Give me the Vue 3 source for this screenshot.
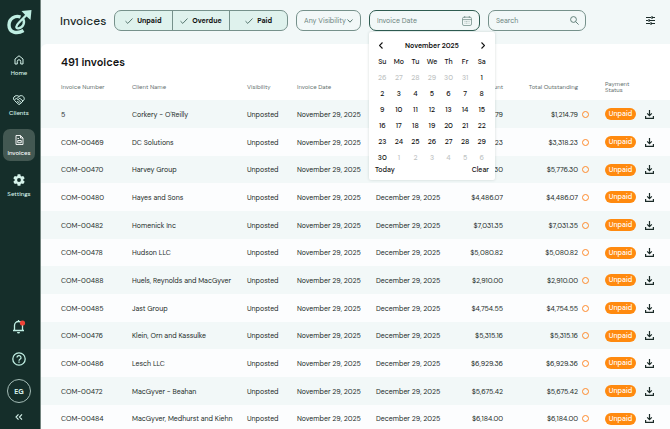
<script setup>
import { ref } from 'vue'

const statuses = ref([
  { label: 'Unpaid', on: true },
  { label: 'Overdue', on: true },
  { label: 'Paid', on: true },
])

const invoices = [
  ['5', "Corkery - O'Reilly", '$1,214.79'],
  ['COM-00469', 'DC Solutions', '$3,318.23'],
  ['COM-00470', 'Harvey Group', '$5,776.30'],
  ['COM-00480', 'Hayes and Sons', '$4,486.07'],
  ['COM-00482', 'Homenick Inc', '$7,031.35'],
  ['COM-00478', 'Hudson LLC', '$5,080.82'],
  ['COM-00488', 'Huels, Reynolds and MacGyver', '$2,910.00'],
  ['COM-00485', 'Jast Group', '$4,754.55'],
  ['COM-00476', 'Klein, Orn and Kassulke', '$5,315.16'],
  ['COM-00486', 'Lesch LLC', '$6,929.36'],
  ['COM-00472', 'MacGyver - Beahan', '$5,675.42'],
  ['COM-00484', 'MacGyver, Medhurst and Kiehn', '$6,184.00'],
].map(([number, client, amount]) => ({ number, client, amount }))

const weekdays = ['Su', 'Mo', 'Tu', 'We', 'Th', 'Fr', 'Sa']
const weeks = Array.from({ length: 6 }, (_, w) =>
  weekdays.map((_, d) => {
    const date = new Date(2025, 9, 26 + w * 7 + d)
    return { day: date.getDate(), muted: date.getMonth() !== 10 }
  })
)
</script>

<template>
  <div class="app">
    <nav class="sidebar">
      <a href="#" class="logo" aria-label="Dashboard">
        <svg width="25" height="26" viewBox="0 0 25 26" fill="none" stroke="#bfeee2">
          <path d="M13.500 8C8 6 2 9.500 2 16c0 7.500 8 9.500 14.500 5.500" stroke-width="3.400" />
          <path d="M20.500 5L12 13.500c-3.500 3.500-3.500 6.300-.5 5.800 4.500-.8 7.500-6 4-10.300" stroke-width="2.300" />
          <path d="M14.500 2L24.500 1l-1 10-3-2.800-2.700-2.700z" fill="#bfeee2" stroke="none" />
        </svg>
      </a>
      <div class="links">
        <a href="#" class="link">
          <svg width="10" height="10" viewBox="0 0 20 20" fill="none" stroke="currentColor" stroke-width="2">
            <path d="M2 8L10 1.500 18 8v10h-4.500v-5a3.500 3.500 0 0 0-7 0v5H2z" />
          </svg>
          Home
        </a>
        <a href="#" class="link">
          <svg width="12" height="10" viewBox="0 0 24 20" fill="none" stroke="currentColor" stroke-width="2">
            <path d="M12 3C9 0 4 1 2 4s-1 5 1 7l8 7.500c1 .8 2 .6 3-.2l7-7.300c2-2 2-5 0-7.500-2.500-2.800-6.500-3-9-.5L7.500 7.500c1 2 3 2 4.500.5l1.500-1.500L20 12M11 10l5.500 5M8.500 12l5 5M3 10l4-4" />
          </svg>
          Clients
        </a>
        <a href="#" class="link active" aria-current="page">
          <svg width="9" height="10" viewBox="0 0 18 20" fill="none" stroke="currentColor" stroke-width="1.800">
            <path d="M2 1h9l5 5v13H2zM11 1v5h5M5 7h3M5.500 11h7v4.500h-7z" />
          </svg>
          Invoices
        </a>
        <a href="#" class="link">
          <svg width="12" height="12" viewBox="2 2 20 20" fill="currentColor">
            <path fill-rule="evenodd" d="M19.140 12.940c.04-.3.060-.61.060-.94s-.02-.64-.07-.94l2.030-1.580a.5.500 0 0 0 .12-.61l-1.920-3.320a.5.500 0 0 0-.59-.22l-2.390.96a7 7 0 0 0-1.620-.94l-.36-2.540A.5.500 0 0 0 13.920 2.400h-3.840a.5.500 0 0 0-.47.41l-.36 2.540a7 7 0 0 0-1.620.94l-2.390-.96a.5.500 0 0 0-.59.220L2.740 8.870a.5.500 0 0 0 .12.610l2.030 1.580a6 6 0 0 0 0 1.880l-2.030 1.580a.5.500 0 0 0-.12.610l1.920 3.320c.12.220.37.290.59.220l2.390-.96c.5.380 1.030.7 1.620.94l.36 2.540c.05.240.24.410.48.410h3.840c.24 0 .44-.17.470-.41l.36-2.540a7 7 0 0 0 1.620-.94l2.390.96c.22.080.47 0 .59-.22l1.920-3.320a.5.500 0 0 0-.12-.61zM12 15.200a3.200 3.200 0 1 1 0-6.400 3.200 3.200 0 0 1 0 6.400z" />
          </svg>
          Settings
        </a>
      </div>
      <div class="tools">
        <button type="button" class="tool" aria-label="Notifications">
          <svg width="14" height="15" viewBox="0 0 14 15" fill="none" stroke="#bfeee2" stroke-width="1.300">
            <path d="M1 11.500h11M2.500 11.500V6.500a4 4 0 0 1 8 0v5M6.500 2.500V1" />
            <path d="M5 13a1.500 1.500 0 0 0 3 0z" fill="#bfeee2" stroke="none" />
            <circle cx="10.500" cy="4" r="2.600" fill="#f04438" stroke="none" />
          </svg>
        </button>
        <button type="button" class="tool" aria-label="Help">
          <svg width="14" height="14" viewBox="0 0 14 14" fill="none" stroke="#bfeee2" stroke-width="1.300">
            <circle cx="7" cy="7" r="6.200" />
            <path d="M5 5.600a2 2 0 1 1 3 1.700c-.7.400-1 .8-1 1.500M7 9.600v1.200" />
          </svg>
        </button>
        <button type="button" class="avatar" aria-label="Account">EG</button>
        <button type="button" class="tool collapse" aria-label="Collapse menu">
          <svg width="8" height="6" viewBox="0 0 8 6" fill="none" stroke="#d5f2ea" stroke-width="1.100">
            <path d="M3.500.4L1 3l2.500 2.600M7 .4L4.500 3 7 5.600" />
          </svg>
        </button>
      </div>
    </nav>

    <main class="main">
      <header class="topbar">
        <h1>Invoices</h1>
        <div class="segments">
          <button v-for="s in statuses" :key="s.label" type="button" class="segment" :aria-pressed="s.on" @click="s.on = !s.on">
            <svg width="8" height="6" viewBox="0 0 8 6" fill="none" stroke="#54746d"><path d="M.5 3.200L2.800 5.400 7.500.5" /></svg>
            {{ s.label }}
          </button>
        </div>
        <div class="field visibility">
          <select aria-label="Visibility"><option>Any Visibility</option></select>
          <svg width="6" height="4" viewBox="0 0 6 4" fill="none" stroke="#54746d"><path d="M.5.500L3 3.200 5.500.5" /></svg>
        </div>
        <div class="field date">
          <input type="text" placeholder="Invoice Date" aria-label="Invoice Date" />
          <svg width="10" height="10" viewBox="0 0 10 10" fill="none" stroke="#76918b" stroke-width=".8">
            <rect x=".5" y="1.200" width="9" height="8.300" rx="1.500" />
            <path d="M.5 3.600h9M2.700 0v2M7.300 0v2" />
            <path d="M2.500 5.500h5M2.500 7.200h5" stroke-width=".5" stroke-dasharray="1 .5" />
          </svg>
          <div class="calendar">
            <div class="cal-head">
              <button type="button" aria-label="Previous month">
                <svg width="4" height="7" viewBox="0 0 4 7" fill="none" stroke="#111" stroke-width="1.100"><path d="M3.500.5l-3 3 3 3" /></svg>
              </button>
              <strong>November 2025</strong>
              <button type="button" aria-label="Next month">
                <svg width="4" height="7" viewBox="0 0 4 7" fill="none" stroke="#111" stroke-width="1.100"><path d="M.5.500l3 3-3 3" /></svg>
              </button>
            </div>
            <table class="cal-grid">
              <thead><tr><th v-for="d in weekdays" :key="d" scope="col">{{ d }}</th></tr></thead>
              <tbody>
                <tr v-for="(week, i) in weeks" :key="i">
                  <td v-for="(c, j) in week" :key="j"><button type="button" :class="{ muted: c.muted }">{{ c.day }}</button></td>
                </tr>
              </tbody>
            </table>
            <div class="cal-foot">
              <button type="button">Today</button>
              <button type="button">Clear</button>
            </div>
          </div>
        </div>
        <div class="field search">
          <input type="search" placeholder="Search" aria-label="Search" />
          <svg width="9" height="9" viewBox="0 0 9 9" fill="none" stroke="#54746d" stroke-width=".9"><circle cx="3.500" cy="3.500" r="2.900" /><path d="M5.700 5.700L8.600 8.600" /></svg>
        </div>
        <button type="button" class="settings" aria-label="Table options">
          <svg width="9" height="9" viewBox="0 0 9 9" fill="none" stroke="#1b2b28" stroke-width="1.100">
            <path d="M0 1.500h5M6.500 1.500H9M6 0v3M0 4.500h2M3.500 4.500H9M3 3v3M0 7.500h4M5.500 7.500H9M5 6v3" />
          </svg>
        </button>
      </header>

      <section class="card">
        <h2>491 invoices</h2>
        <table class="invoices">
          <colgroup>
            <col class="c-number" /><col /><col class="c-vis" /><col class="c-date" /><col class="c-due" />
            <col class="c-amount" /><col class="c-total" /><col class="c-status" /><col class="c-action" />
          </colgroup>
          <thead>
            <tr>
              <th scope="col">Invoice Number</th>
              <th scope="col">Client Name</th>
              <th scope="col">Visibility</th>
              <th scope="col">Invoice Date</th>
              <th scope="col">Due Date</th>
              <th scope="col" class="num">Amount</th>
              <th scope="col" class="num total">Total Outstanding</th>
              <th scope="col" class="status">Payment<br />Status</th>
              <td></td>
            </tr>
          </thead>
          <tbody>
            <tr v-for="inv in invoices" :key="inv.number">
              <td>{{ inv.number }}</td>
              <td>{{ inv.client }}</td>
              <td>Unposted</td>
              <td>November 29, 2025</td>
              <td>December 29, 2025</td>
              <td class="num">{{ inv.amount }}</td>
              <td><div class="outstanding">{{ inv.amount }}<span class="ring"></span></div></td>
              <td class="status"><span class="pill">Unpaid</span></td>
              <td class="action">
                <button type="button" :aria-label="'Download ' + inv.number">
                  <svg width="9" height="9" viewBox="0 0 9 9" fill="none" stroke="#1b2b28" stroke-width="1.200">
                    <path d="M4.500 0v5.500M2.200 3.300l2.300 2.300 2.300-2.300M.6 6v2.300h7.800V6" />
                  </svg>
                </button>
              </td>
            </tr>
          </tbody>
        </table>
      </section>
    </main>
  </div>
</template>

<style>
body {
  margin: 0;
  overflow: hidden;
}
</style>

<style scoped>
.app {
  display: flex;
  height: 100vh;
  overflow: hidden;
  font-family: 'DM Sans', Inter, 'Liberation Sans', sans-serif;
  font-size: 7px;
  color: #1b2b28;
  background: #f2f8f8;
}
button, input, select {
  font: inherit;
  color: inherit;
  border: 0;
  padding: 0;
  margin: 0;
  background: none;
}
button { cursor: pointer; }
svg { display: block; flex: none; }
a { color: inherit; text-decoration: none; }

.sidebar {
  flex: none;
  display: flex;
  flex-direction: column;
  align-items: center;
  box-sizing: border-box;
  width: 41px;
  padding: 9px 5px 9px 3px;
  background: #152e2a;
  border-right: 1px solid #73847f;
  color: #d5f2ea;
}
.logo { margin-bottom: 14px; }
.links {
  display: flex;
  flex-direction: column;
  gap: 8px;
}
.link {
  display: flex;
  flex-direction: column;
  align-items: center;
  justify-content: center;
  gap: 4px;
  box-sizing: border-box;
  width: 32px;
  height: 32px;
  padding-top: 2px;
  border-radius: 7px;
  font-size: 6px;
  font-weight: 500;
  line-height: 8px;
}
.link.active { background: #435852; color: #fff; }
.tools {
  display: flex;
  flex-direction: column;
  align-items: center;
  margin-top: auto;
}
.tool { margin-bottom: 18px; }
.avatar {
  width: 24px;
  height: 24px;
  margin: -5px 0 11px;
  border: 1px solid #a5bdb7;
  border-radius: 50%;
  font-weight: 700;
}
.collapse { margin-bottom: 0; }

.main {
  flex: 1;
  min-width: 0;
}
.topbar {
  display: flex;
  align-items: center;
  box-sizing: border-box;
  height: 44px;
  padding: 0 14px 3px 19px;
}
h1 {
  flex: none;
  width: 46px;
  margin: 0 8px 0 0;
  font-size: 12px;
  line-height: 16px;
  font-weight: 500;
}
.segments {
  flex: none;
  display: flex;
  box-sizing: border-box;
  width: 174px;
  height: 21px;
  border: 1px solid #76918b;
  border-radius: 7px;
  background: #dff2ed;
  overflow: hidden;
}
.segment {
  flex: 1;
  display: flex;
  align-items: center;
  justify-content: center;
  gap: 4px;
  color: #111;
  font-weight: 700;
}
.segment + .segment { border-left: 1px solid #76918b; }
.field {
  position: relative;
  display: flex;
  align-items: center;
  box-sizing: border-box;
  height: 21px;
  margin-left: 8px;
  padding: 0 7px;
  border: 1px solid #76918b;
  border-radius: 7px;
  color: #6d8580;
}
.field input,
.field select {
  flex: 1;
  min-width: 0;
  height: 19px;
  outline: none;
  appearance: none;
}
.field input::placeholder { color: #6d8580; opacity: 1; }
.visibility { width: 65px; }
.date {
  width: 111px;
  border-color: #2f5c51;
}
.search {
  width: 98px;
  padding-right: 6px;
}
.settings { margin-left: auto; margin-right: 1px; }

.calendar {
  position: absolute;
  z-index: 2;
  top: 21px;
  left: -1px;
  box-sizing: border-box;
  width: 126px;
  padding: 5px 5px 6px;
  background: #fff;
  border-radius: 2px;
  box-shadow: 0 0 3px rgba(20, 50, 45, 0.18);
  color: #111;
}
.cal-head {
  display: flex;
  align-items: center;
  justify-content: space-between;
  height: 17px;
  padding: 0 5px;
}
.cal-head strong { font-weight: 600; }
.cal-grid {
  width: 100%;
  table-layout: fixed;
  border-collapse: collapse;
}
.cal-grid th,
.cal-grid td {
  height: 16px;
  padding: 0;
  text-align: center;
  font-weight: 500;
  line-height: 10px;
}
.cal-grid button { display: block; width: 100%; }
.cal-grid .muted { color: #c0c4c4; }
.cal-foot {
  display: flex;
  justify-content: space-between;
  line-height: 8px;
  padding: 0 1px;
  font-weight: 500;
}

.card {
  background: #fff;
  border-top-left-radius: 6px;
}
h2 {
  margin: 0;
  padding: 10px 20px 4px;
  font-size: 11px;
  line-height: 16px;
  font-weight: 600;
  color: #111;
}
.invoices {
  width: 100%;
  table-layout: fixed;
  border-collapse: collapse;
}
.invoices th,
.invoices td {
  padding: 0;
  text-align: left;
  white-space: nowrap;
}
.invoices th {
  height: 26px;
  font-size: 6px;
  line-height: 6px;
  font-weight: 400;
  color: #66716f;
}
.invoices tbody tr { height: 28px; background: #fcfdfe; }
.invoices tbody tr:nth-child(3n) { height: 27px; }
.invoices tbody tr:nth-child(odd) { background: #f2f8f8; }
.invoices tr > :first-child { padding-left: 20px; }
.invoices .num { text-align: right; }
.invoices .total { padding-right: 11px; }
.invoices .status { padding-left: 16px; }
.c-number { width: 91px; }
.c-vis { width: 50px; }
.c-date { width: 79px; }
.c-due { width: 70px; }
.c-amount { width: 57px; }
.c-total { width: 86px; }
.c-status { width: 47px; }
.c-action { width: 34px; }
.outstanding {
  display: flex;
  align-items: center;
  justify-content: flex-end;
  gap: 4px;
}
.ring {
  box-sizing: border-box;
  width: 7px;
  height: 7px;
  border: 1px solid #ff8a2b;
  border-radius: 50%;
}
.pill {
  display: block;
  width: 31px;
  border-radius: 6px;
  background: #ff8a0f;
  color: #fff;
  font-weight: 500;
  line-height: 12px;
  text-align: center;
}
.invoices .action { padding-left: 9px; }
.action button { display: block; }
</style>
